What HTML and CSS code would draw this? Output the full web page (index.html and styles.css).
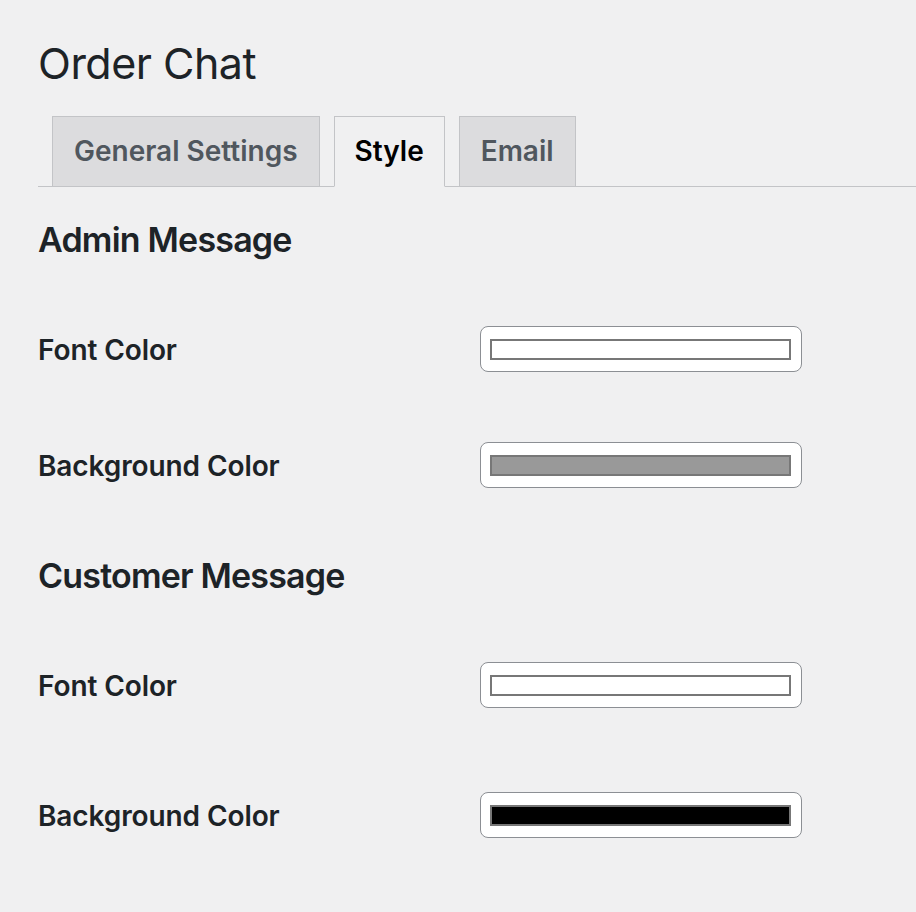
FILE: index.html
```html
<!DOCTYPE html>
<html lang="en">
<head>
<meta charset="UTF-8" />
<meta name="viewport" content="width=device-width, initial-scale=1" />
<title>Order Chat</title>
<link rel="stylesheet" href="styles.css">
</head>
<body>

<div class="wrap">
  <h1 class="page-title">Order Chat</h1>

  <nav class="nav-tab-wrapper">
    <a href="#" class="nav-tab">General Settings</a>
    <a href="#" class="nav-tab nav-tab-active">Style</a>
    <a href="#" class="nav-tab">Email</a>
  </nav>

  <section class="style-section">
    <h2>Admin Message</h2>
    <div class="field-row">
      <label class="field-label">Font Color</label>
      <span class="color-picker"><span class="swatch swatch-white"></span></span>
    </div>
    <div class="field-row">
      <label class="field-label">Background Color</label>
      <span class="color-picker"><span class="swatch swatch-grey"></span></span>
    </div>
  </section>

  <section class="style-section">
    <h2>Customer Message</h2>
    <div class="field-row">
      <label class="field-label">Font Color</label>
      <span class="color-picker"><span class="swatch swatch-white"></span></span>
    </div>
    <div class="field-row field-row-wide">
      <label class="field-label">Background Color</label>
      <span class="color-picker"><span class="swatch swatch-black"></span></span>
    </div>
  </section>
</div>

</body>
</html>
```

FILE: styles.css
```css
/* admin settings page, 2x scale */
html, body {
  margin: 0;
  padding: 0;
}
body {
  font-family: Inter, "Liberation Sans", sans-serif;
  background-color: #f0f0f1;
  color: #1d2327;
}
.wrap {
  padding: 33px 0 0 38px;
}
.page-title {
  margin: 0;
  font-size: 43px;
  line-height: 60px;
  font-weight: 400;
  letter-spacing: -0.5px;
  color: #1d2327;
}
.nav-tab-wrapper {
  display: flex;
  margin-top: 23px;
  border-bottom: 1px solid #c3c4c7;
}
.nav-tab {
  margin-left: 14px;
  padding: 10px 21px 11px;
  border: 1px solid #c3c4c7;
  border-bottom: none;
  background-color: #dcdcde;
  color: #50575e;
  font-size: 28px;
  line-height: 48px;
  font-weight: 600;
  text-decoration: none;
}
.nav-tab-active {
  margin-bottom: -1px;
  padding: 10px 20px 11px;
  border-bottom: 1px solid #f0f0f1;
  background-color: #f0f0f1;
  color: #000;
}
.style-section h2 {
  margin: 33px 0 0;
  font-size: 34px;
  line-height: 40px;
  font-weight: 600;
  letter-spacing: -0.8px;
  color: #1d2327;
}
.style-section + .style-section h2 {
  margin-top: 68px;
}
.field-row {
  display: flex;
  align-items: center;
  margin-top: 70px;
}
.style-section h2 + .field-row {
  margin-top: 66px;
}
.field-row-wide {
  margin-top: 84px;
}
.field-label {
  width: 442px;
  padding-top: 2px;
  font-size: 28px;
  font-weight: 600;
  letter-spacing: -0.1px;
  color: #1d2327;
}
.color-picker {
  display: block;
  box-sizing: border-box;
  width: 322px;
  height: 46px;
  padding: 12px 9px 0;
  background-color: #fff;
  border: 1px solid #8c8f94;
  border-radius: 8px;
}
.swatch {
  display: block;
  box-sizing: border-box;
  width: 301px;
  height: 21px;
  border: 2px solid #777;
}
.swatch-white {
  background-color: #fff;
}
.swatch-grey {
  background-color: #999;
}
.swatch-black {
  background-color: #000;
}
```
